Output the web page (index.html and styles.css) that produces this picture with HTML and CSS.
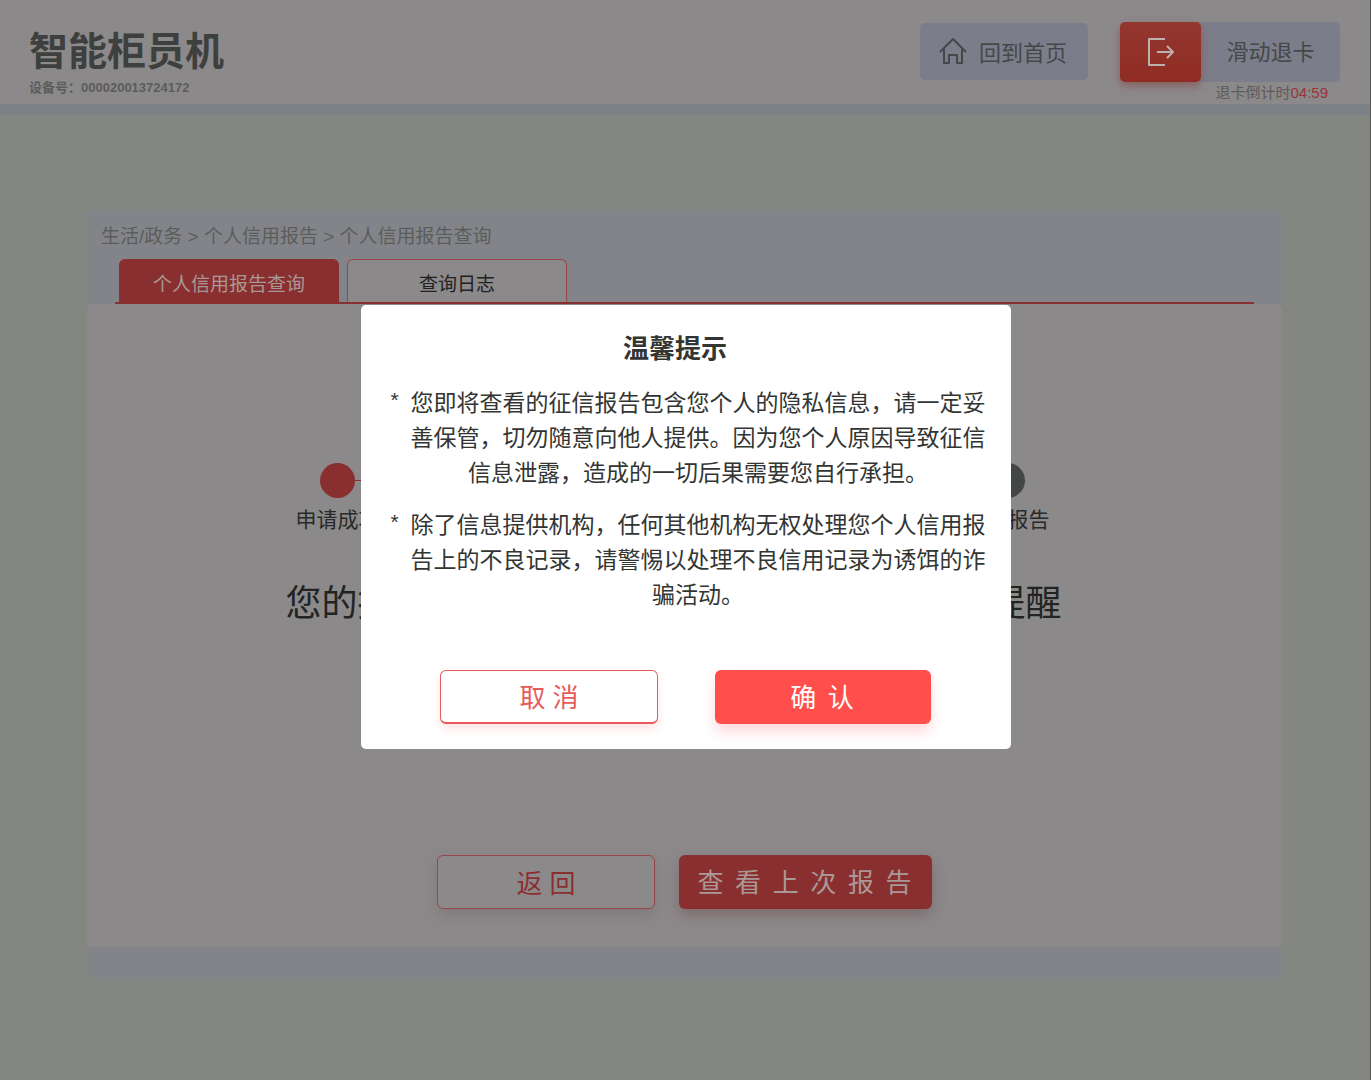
FILE: index.html
```html
<!DOCTYPE html>
<html lang="zh-CN">
<head>
<meta charset="utf-8">
<meta name="viewport" content="width=device-width, initial-scale=1">
<title>智能柜员机</title>
<link rel="stylesheet" href="styles.css">
</head>
<body>
<header class="topbar">
  <div class="brand">
    <h1 class="brand-name">智能柜员机</h1>
    <p class="brand-device">设备号：000020013724172</p>
  </div>
  <div class="actions">
    <button class="home" type="button">
      <svg class="home-icon" viewBox="0 0 28 28" aria-hidden="true"><path d="M1 15 14 2l13 13M5 12v14h5v-8h8v8h5V12" /></svg>
      回到首页
    </button>
    <div class="exit">
      <button class="slider" type="button">
        <span class="slider-thumb">
          <svg class="slider-icon" viewBox="0 0 28 28" aria-hidden="true"><path d="M18 1H2v26h16M10 14h16M20 8l6 6-6 6" /></svg>
        </span>
        <span class="slider-label">滑动退卡</span>
      </button>
      <p class="countdown">退卡倒计时<span class="countdown-time">04:59</span></p>
    </div>
  </div>
</header>

<main class="page">
  <section class="panel">
    <nav class="crumbs">生活/政务 &gt; 个人信用报告 &gt; 个人信用报告查询</nav>
    <div class="tabs" role="tablist">
      <button class="tab tab-active" type="button" role="tab" aria-selected="true">个人信用报告查询</button>
      <button class="tab" type="button" role="tab" aria-selected="false">查询日志</button>
    </div>
    <div class="content">
      <ol class="steps">
        <li class="step step-done">申请成功</li>
        <li class="step-line"></li>
        <li class="step">查看报告</li>
      </ol>
      <h2 class="notice">您的报告正在生成, 生成后将以短信方式向您提醒</h2>
      <div class="buttons">
        <button class="btn btn-outline" type="button">返 回</button>
        <button class="btn btn-solid btn-wide" type="button">查&nbsp;&nbsp;看&nbsp;&nbsp;上&nbsp;&nbsp;次&nbsp;&nbsp;报&nbsp;&nbsp;告</button>
      </div>
    </div>
  </section>
</main>

<div class="overlay">
  <section class="dialog" role="dialog" aria-modal="true" aria-labelledby="dialog-title">
    <h2 class="dialog-title" id="dialog-title">温馨提示</h2>
    <ul class="tips">
      <li class="tip"><span class="tip-mark">*</span><p class="tip-text">您即将查看的征信报告包含您个人的隐私信息，请一定妥善保管，切勿随意向他人提供。因为您个人原因导致征信信息泄露，造成的一切后果需要您自行承担。</p></li>
      <li class="tip"><span class="tip-mark">*</span><p class="tip-text">除了信息提供机构，任何其他机构无权处理您个人信用报告上的不良记录，请警惕以处理不良信用记录为诱饵的诈骗活动。</p></li>
    </ul>
    <div class="dialog-buttons">
      <button class="btn btn-cancel" type="button">取 消</button>
      <button class="btn btn-confirm" type="button">确&nbsp;&nbsp;认</button>
    </div>
  </section>
</div>
</body>
</html>
```
FILE: styles.css
```css
:root {
  --surface: #8c898b;
  --page: #848682;
  --panel: #838489;
  --red: #8a2f2f;
}

* { box-sizing: border-box; }

body {
  margin: 0;
  min-height: 100vh;
  border-right: 1px solid #555655;
  background: var(--page);
  color: #222422;
  font-family: "Liberation Sans", "Noto Sans CJK SC", sans-serif;
}

h1, h2, p, ul, ol { margin: 0; padding: 0; }
ul, ol { list-style: none; }
button { border: 0; padding: 0; font-family: inherit; color: inherit; cursor: pointer; white-space: nowrap; }

/* Top bar */
.topbar {
  display: flex;
  justify-content: space-between;
  min-height: 104px;
  padding: 22px 30px 0 29px;
  background: var(--surface);
  box-shadow: 0 11px 0 #7c8087;
}
.brand { padding-top: 3px; }
.brand-name { font-size: 39px; line-height: 54px; font-weight: 700; color: #3e403d; }
.brand-device { font-size: 13px; line-height: 18px; font-weight: 700; color: #5b5c5b; }
.actions { display: flex; align-items: flex-start; gap: 32px; }
.home {
  display: flex;
  align-items: center;
  gap: 12px;
  height: 57px;
  margin-top: 1px;
  padding: 0 21px 2px 19px;
  border-radius: 5px;
  background: #7c7d8a;
  color: #444849;
  font-size: 22px;
}
.home-icon { width: 28px; height: 28px; }
.home-icon path, .slider-icon path { fill: none; stroke: #444849; stroke-width: 2; stroke-linejoin: round; }
.slider {
  display: flex;
  height: 60px;
  width: 220px;
  border-radius: 5px;
  background: #7c7d8a;
  color: #444849;
  font-size: 22px;
}
.slider-thumb {
  display: grid;
  place-items: center;
  width: 81px;
  height: 60px;
  border-radius: 5px;
  background: linear-gradient(#93372f, #902c23);
  box-shadow: 0 4px 8px #865f5f;
}
.slider-icon { width: 28px; height: 28px; }
.slider-icon path { stroke: #bfb0b0; }
.slider-label { flex: 1; line-height: 62px; }
.countdown { padding-right: 12px; font-size: 15px; line-height: 22px; text-align: right; color: #5b5c5b; }
.countdown-time { color: #98343a; }

/* Main panel */
.page { padding: 106px 88px 102px 87px; }
.panel { padding: 8px 0 32px; border-radius: 6px; background: var(--panel); }
.crumbs { padding: 0 14px; font-size: 19px; line-height: 38px; color: #5b5d5c; }
.tabs {
  display: flex;
  gap: 8px;
  margin: 3px 28px 0;
  padding: 0 4px;
  border-bottom: 2px solid var(--red);
}
.tab {
  width: 220px;
  height: 43px;
  border: 1px solid #96474a;
  border-bottom: 0;
  border-radius: 6px 6px 0 0;
  background: var(--surface);
  color: #1f2220;
  font-size: 19px;
  padding-top: 2px;
}
.tab-active { background: var(--red); border-color: var(--red); color: #aa9896; }
.content {
  min-height: 641px;
  padding: 159px 0 38px;
  background: var(--surface);
  border-radius: 6px;
}
.steps {
  display: flex;
  justify-content: space-between;
  max-width: 778px;
  margin: 0 auto;
  padding: 0 24px 0 0;
}
.step { font-size: 21px; line-height: 30px; text-align: center; color: #282a28; }
.step::before {
  content: "";
  display: block;
  width: 35px;
  height: 35px;
  margin: 0 auto 7px;
  border-radius: 50%;
  background: #434744;
}
.step-done::before { background: var(--red); }
.step-line { flex: 1; height: 1px; margin: 17px 0 0 -25px; background: linear-gradient(90deg, var(--red) 50%, transparent 50%); }
.notice { margin-top: 43px; padding-right: 22px; font-size: 36px; line-height: 52px; font-weight: 400; text-align: center; }
.buttons { display: flex; justify-content: center; gap: 24px; margin-top: 225px; }

.btn { height: 54px; padding-bottom: 2px; border-radius: 6px; font-size: 26px; }
.btn-outline { width: 218px; border: 1px solid #96474a; background: var(--surface); color: var(--red); box-shadow: 0 6px 14px #817878; }
.btn-solid { width: 253px; background: var(--red); color: #aa9896; box-shadow: 0 6px 14px #7e6c6c; }
.btn-wide, .btn-confirm { padding: 0 2px 3px 0; font-family: "Noto Sans CJK SC", sans-serif; }

/* Dialog */
.overlay {
  position: fixed;
  inset: 0;
  display: flex;
  align-items: center;
  justify-content: center;
  padding-bottom: 26px;
}
.dialog { width: 650px; padding: 26px 25px 25px 30px; border-radius: 5px; background: #fff; color: #333533; }
.dialog-title { padding-right: 26px; font-size: 26px; line-height: 36px; text-align: center; }
.tips { display: grid; gap: 17px; margin-top: 19px; }
.tip { display: flex; }
.tip-mark { width: 20px; font-size: 21px; line-height: 27px; }
.tip-text { flex: 1; font-size: 23px; line-height: 35px; text-align: center; }
.dialog-buttons { display: flex; justify-content: center; gap: 57px; margin-top: 57px; padding-right: 5px; }
.btn-cancel { width: 218px; border: 1px solid #e85b5b; border-bottom-width: 2px; background: #fff; color: #e75a5a; box-shadow: 0 5px 10px #ffe3e5; }
.btn-confirm { width: 216px; background: #ff4e4b; color: #fff; box-shadow: 0 8px 14px #ffd9db; }
```
